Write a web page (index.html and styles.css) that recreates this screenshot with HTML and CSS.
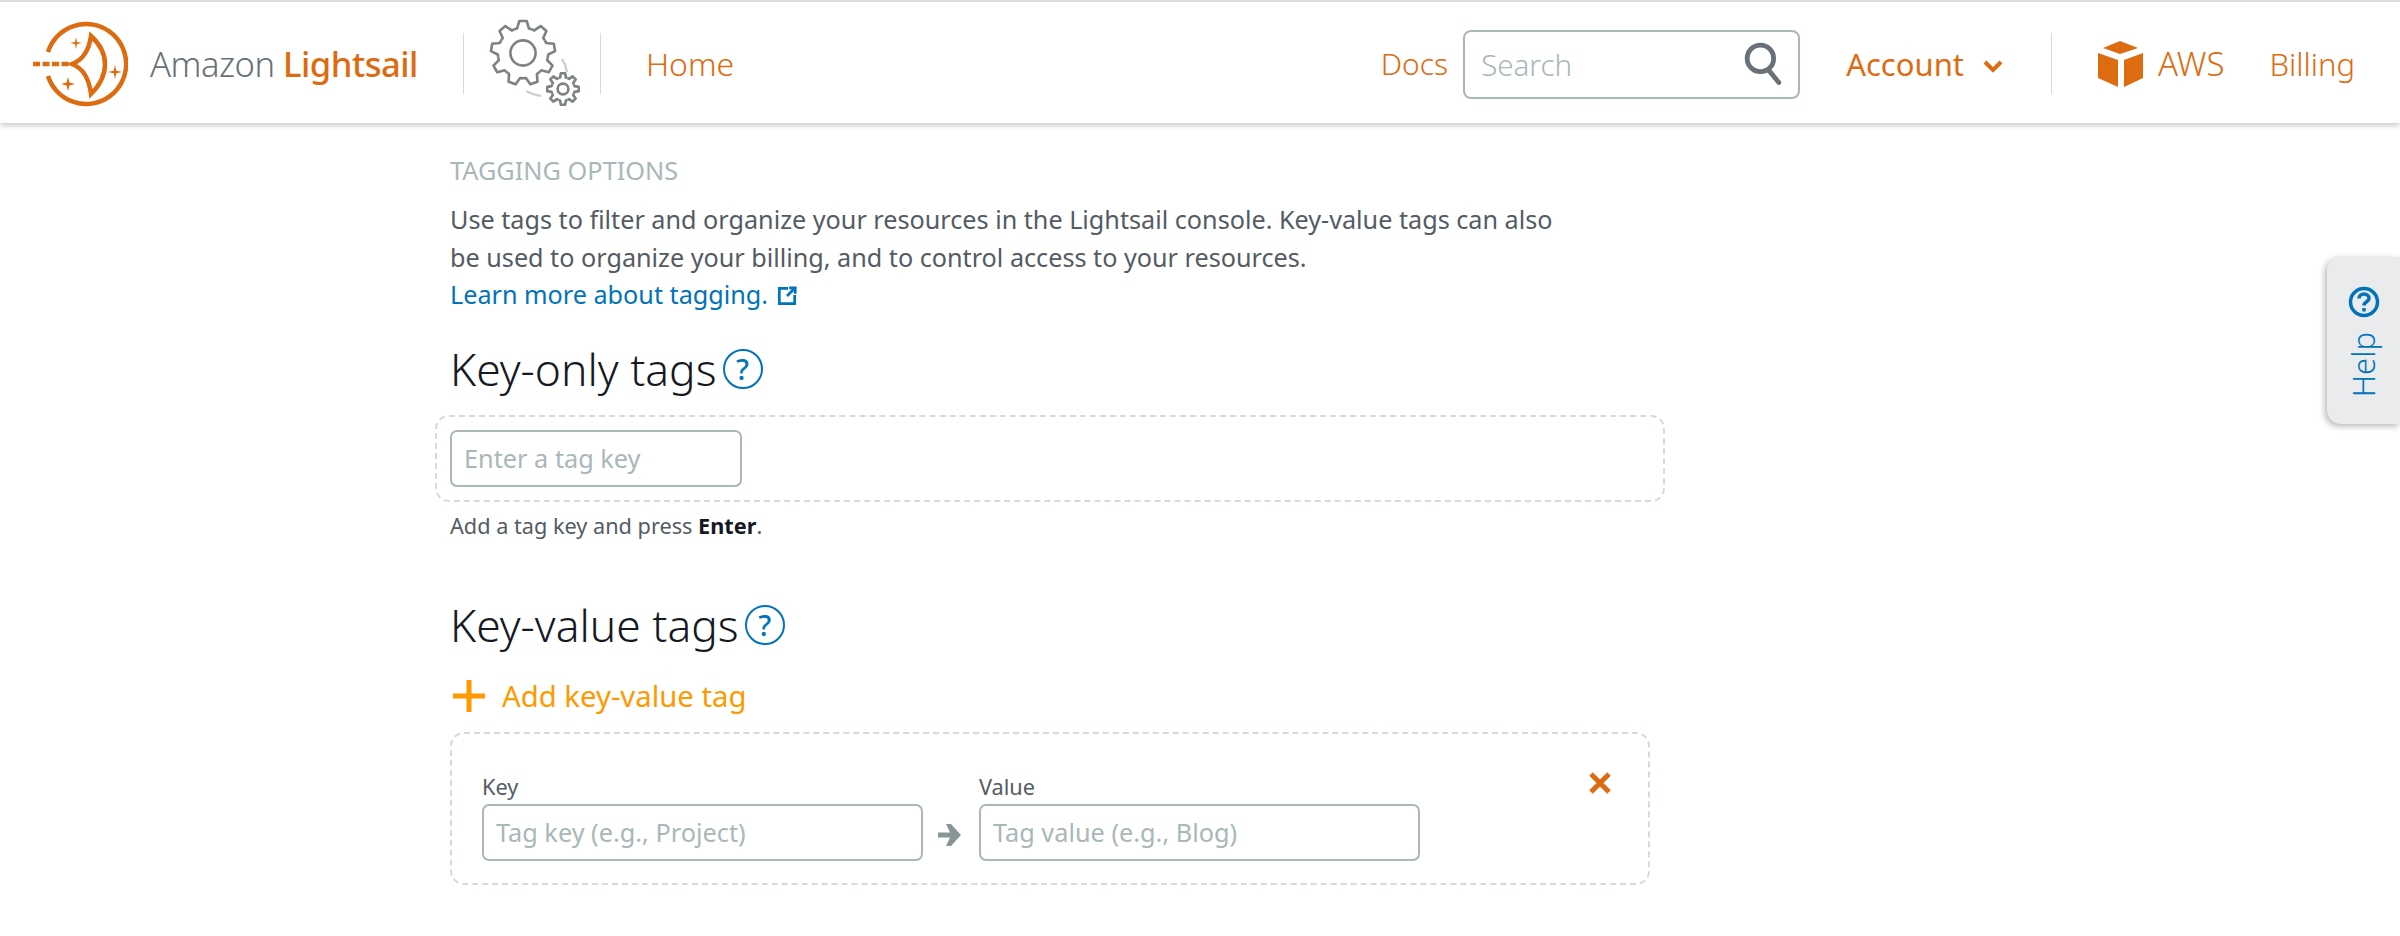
FILE: index.html
```html
<!DOCTYPE html>
<html lang="en">
<head>
<meta charset="utf-8">
<title>Amazon Lightsail</title>
<link rel="stylesheet" href="styles.css">
</head>
<body>
<header class="topbar">
  <a class="brand" href="#">
    <svg class="logo" width="100" height="100" viewBox="28 13 100 100">
      <path class="logo-line" d="M48 51A40 40 0 1 1 48 75"/>
      <path class="logo-dash" d="M33 63H72"/>
      <path class="logo-line" d="M72 63Q88 57 91 35Q105 48 105 63Q105 79 91 93Q88 69 72 63Z"/>
      <path class="logo-star" d="M76 36L77 41L82 42L77 43L76 48L75 43L70 42L75 41Z"/>
      <path class="logo-star" d="M115 64L116.300 69.700L122 71L116.300 72.300L115 78L113.700 72.300L108 71L113.700 69.700Z"/>
      <path class="logo-star" d="M68 76L69.500 81.500L75 83L69.500 84.500L68 90L66.500 84.500L61 83L66.500 81.500Z"/>
    </svg>
    <span class="brand-name">Amazon <b>Lightsail</b></span>
  </a>
  <span class="rule rule-a"></span>
  <svg class="gears" width="96" height="96" viewBox="484 13 96 96">
    <defs>
      <path id="tooth-big" d="M-9.600 -26.300L-6.500 -27.300L-4.200 -35.500H4.200L6.500 -27.300L9.600 -26.300"/>
      <path id="tooth-small" d="M-5 -12.100L-3.200 -12.700L-2.400 -17.500H2.400L3.200 -12.700L5 -12.100"/>
    </defs>
    <path class="gear-arc" d="M559 56Q563 62 564 69M523 88Q530 92 538 93"/>
    <g class="gear-line" transform="translate(520 50) scale(.9)">
      <use href="#tooth-big"/><use href="#tooth-big" transform="rotate(40)"/><use href="#tooth-big" transform="rotate(80)"/>
      <use href="#tooth-big" transform="rotate(120)"/><use href="#tooth-big" transform="rotate(160)"/><use href="#tooth-big" transform="rotate(200)"/>
      <use href="#tooth-big" transform="rotate(240)"/><use href="#tooth-big" transform="rotate(280)"/><use href="#tooth-big" transform="rotate(320)"/>
      <circle r="14"/>
    </g>
    <g class="gear-line" transform="translate(560 86) scale(.9)">
      <use href="#tooth-small"/><use href="#tooth-small" transform="rotate(45)"/><use href="#tooth-small" transform="rotate(90)"/>
      <use href="#tooth-small" transform="rotate(135)"/><use href="#tooth-small" transform="rotate(180)"/><use href="#tooth-small" transform="rotate(225)"/>
      <use href="#tooth-small" transform="rotate(270)"/><use href="#tooth-small" transform="rotate(315)"/>
      <circle r="6"/>
    </g>
  </svg>
  <span class="rule rule-b"></span>
  <a class="nav nav-home" href="#">Home</a>
  <span class="spacer"></span>
  <a class="nav nav-docs" href="#">Docs</a>
  <label class="search">
    <input class="search-input" type="text" placeholder="Search">
    <svg class="search-icon" width="46" height="46" viewBox="0 0 40 40">
      <circle cx="16" cy="16" r="11.500"/>
      <path d="M23 26L32 37"/>
    </svg>
  </label>
  <a class="nav nav-account" href="#">Account
    <svg class="chevron" width="20" height="14" viewBox="0 0 20 14"><path d="M2 3L10 11L18 3"/></svg>
  </a>
  <span class="rule rule-c"></span>
  <svg class="cube" width="46" height="47" viewBox="2097 40 46 47">
    <path d="M2102 48L2119 41L2137 48L2119 54Z"/>
    <path d="M2097 53L2117 60V87L2097 78Z"/>
    <path d="M2123 60L2142 53V78L2123 87Z"/>
  </svg>
  <a class="nav nav-aws" href="#">AWS</a>
  <a class="nav nav-billing" href="#">Billing</a>
</header>

<main class="content">
  <div class="eyebrow">TAGGING OPTIONS</div>
  <p class="intro">Use tags to filter and organize your resources in the Lightsail console. Key-value tags can also<br>be used to organize your billing, and to control access to your resources.<br>
    <a class="learn" href="#">Learn more about tagging.
      <svg class="ext" width="22" height="22" viewBox="0 0 20 20"><path d="M11 3H3V17H17V9M10 10L17 3M12 2.500H17.500V8"/></svg>
    </a>
  </p>

  <h2 class="title title-first">Key-only tags <span class="qmark">?</span></h2>
  <div class="dash dash-key">
    <input class="field field-key" type="text" placeholder="Enter a tag key">
  </div>
  <p class="hint">Add a tag key and press <b>Enter</b>.</p>

  <h2 class="title title-second">Key-value tags <span class="qmark">?</span></h2>
  <a class="add" href="#">
    <svg class="plus" width="32" height="32" viewBox="0 0 32 32"><path d="M16 0V32M0 16H32"/></svg>
    Add key-value tag
  </a>
  <div class="dash dash-pair">
    <label class="pair">
      <span class="pair-label">Key</span>
      <input class="field field-pair" type="text" placeholder="Tag key (e.g., Project)">
    </label>
    <svg class="arrow" width="24" height="24" viewBox="0 0 24 24"><path d="M0 9.500H12L8 1H13L23 12L13 23H8L12 14.500H0Z"/></svg>
    <label class="pair">
      <span class="pair-label">Value</span>
      <input class="field field-pair" type="text" placeholder="Tag value (e.g., Blog)">
    </label>
    <svg class="close" width="24" height="24" viewBox="0 0 24 24"><path d="M3 3L21 21M21 3L3 21"/></svg>
  </div>
</main>

<aside class="help">
  <svg class="help-icon" width="32" height="32" viewBox="0 0 32 32">
    <circle cx="16" cy="16" r="13.500"/>
    <path d="M11 12.500C11 6.500 21 6.500 21 12.500C21 16 16 15.500 16 19.500"/>
    <path d="M16 22V25.500"/>
  </svg>
  <span class="help-text">Help</span>
</aside>
</body>
</html>
```
FILE: styles.css
```css
* { box-sizing: border-box; }
html, body { margin: 0; height: 936px; overflow: hidden; background: #fff; }
body { font-family: "Noto Sans", "Open Sans", sans-serif; color: #545b64; position: relative; }
a { text-decoration: none; }

.topbar {
  display: flex; align-items: center; height: 123px; padding-top: 2px;
  border-top: 2px solid #dcdcdc; background: #fff;
  box-shadow: 0 2px 6px rgba(0,0,0,.25);
  position: relative;
}
.brand { display: flex; align-items: center; margin-left: 28px; }
.logo { display: block; }
.logo-line { fill: none; stroke: #dd6b10; stroke-width: 4.500; }
.logo-dash { fill: none; stroke: #dd6b10; stroke-width: 4.500; stroke-dasharray: 7 2.500; }
.logo-star { fill: #dd6b10; }
.brand-name { font-size: 34.600px; font-weight: 300; color: #687078; margin-left: 22px; letter-spacing: -.5px; white-space: nowrap; }
.brand-name b { font-weight: 500; color: #dd6b10; }
.rule { width: 1px; height: 61px; background: #d5dbdb; flex: none; }
.rule-a { margin-left: 45px; }
.gears { display: block; margin-left: 23px; }
.gear-line { fill: none; stroke: #7d8284; stroke-width: 2.900; stroke-linejoin: round; }
.gear-arc { fill: none; stroke: #cfd2d2; stroke-width: 2.500; }
.rule-b { margin-left: 17px; }
.nav { font-size: 31px; font-weight: 300; color: #dd6b10; white-space: nowrap; }
.nav-home { margin-left: 45px; font-size: 32px; }
.spacer { flex: 1; }
.nav-docs { font-size: 30px; }
.search { position: relative; display: block; margin: 2px 0 0 15px; width: 337px; height: 69px; }
.search-input {
  width: 100%; height: 100%; border: 2px solid #aab7b8; border-radius: 8px; padding: 0 60px 0 16px;
  font: 300 29.500px "Noto Sans", sans-serif; color: #545b64; outline: none;
}
.search-input::placeholder { color: #aab7b8; opacity: 1; }
.search-icon { position: absolute; left: 279px; top: 10px; fill: none; stroke: #687078; stroke-width: 4.200; stroke-linecap: round; }
.nav-account { margin-left: 46px; font-weight: 400; display: flex; align-items: center; }
.chevron { margin-left: 19px; margin-top: 4px; fill: none; stroke: #dd6b10; stroke-width: 4; }
.rule-c { margin-left: 47.500px; }
.cube { display: block; margin-left: 46.500px; fill: #dd6b10; }
.nav-aws { margin-left: 14px; font-size: 33px; }
.nav-billing { margin-left: 45px; margin-right: 45px; }

.content { margin-left: 450px; width: 1215px; }
.eyebrow { margin-top: 28px; font-size: 25.300px; line-height: 38px; color: #aab7b8; }
.intro { margin: 12px 0 0; font-size: 25.200px; line-height: 37.500px; color: #545b64; }
.learn { color: #0073bb; }
.ext { vertical-align: -3px; margin-left: 1px; fill: none; stroke: #0073bb; stroke-width: 2.500; }
.title { display: flex; align-items: center; margin: 0; font-size: 44.400px; font-weight: 300; line-height: 50px; color: #16191f; }
.title-first { margin-top: 30px; }
.title-second { margin-top: 59px; }
.qmark {
  display: flex; align-items: center; justify-content: center; width: 40px; height: 40px; margin-left: 6px;
  border: 2px solid #0073bb; border-radius: 50%; font-size: 29px; font-weight: 500; color: #0073bb; line-height: 1;
}
.dash { border: 2px dashed #d5dbdb; border-radius: 14px; }
.dash-key { margin: 21px 0 0 -15px; height: 87px; padding: 13px 13px; }
.field {
  display: block; height: 57px; border: 2px solid #aab7b8; border-radius: 7px; padding: 0 12px;
  font: 400 25.300px "Noto Sans", sans-serif; outline: none; color: #545b64;
}
.field::placeholder { color: #aab7b8; opacity: 1; }
.field-key { width: 292px; }
.hint { margin: 9px 0 0; font-size: 21.700px; line-height: 30px; color: #545b64; }
.hint b { font-weight: 700; color: #16191f; }
.add { display: flex; align-items: center; margin-top: 26px; height: 40px; font-size: 29.300px; color: #ff9900; }
.plus { margin-left: 3px; margin-right: 17px; fill: none; stroke: #ff9900; stroke-width: 5; }
.dash-pair {
  display: flex; align-items: flex-end; width: 1200px; height: 153px; margin-top: 16px; padding: 41px 0 22px 30px;
}
.pair { display: block; width: 441px; }
.pair-label { display: block; font-size: 21.700px; line-height: 26px; margin-bottom: 4px; color: #545b64; }
.field-pair { width: 100%; }
.arrow { margin: 0 17px 14px 15px; fill: #879596; }
.close { align-self: flex-start; margin: -4px 0 0 168px; fill: none; stroke: #dd6b10; stroke-width: 5; }

.help {
  position: absolute; left: 2327px; top: 257px; width: 73px; height: 167px;
  background: #e9ebed; border-radius: 14px 0 0 14px; box-shadow: -2px 2px 6px rgba(0,0,0,.3);
  display: flex; flex-direction: column; align-items: center; padding-top: 29px;
}
.help-icon { fill: none; stroke: #0073bb; stroke-width: 3.500; display: block; }
.help-text {
  margin-top: 14px; font-size: 31px; font-weight: 300; color: #0073bb; line-height: 1;
  writing-mode: vertical-rl; transform: rotate(180deg);
}
```
